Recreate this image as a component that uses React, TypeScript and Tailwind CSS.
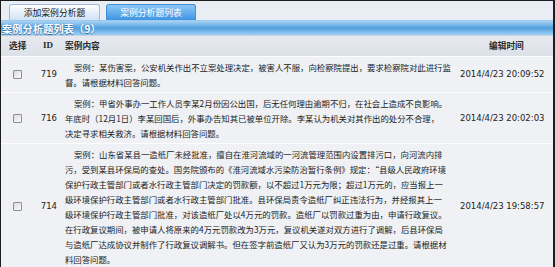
import React from "react";

type Row = {
  id: number;
  lines: string[];
  time: string;
};

const rows: Row[] = [
  {
    id: 719,
    lines: [
      "案例：某伤害案，公安机关作出不立案处理决定，被害人不服，向检察院提出，要求检察院对此进行监",
      "督。请根据材料回答问题。",
    ],
    time: "2014/4/23 20:09:52",
  },
  {
    id: 716,
    lines: [
      "案例：甲省外事办一工作人员李某2月份因公出国，后无任何理由逾期不归，在社会上造成不良影响。",
      "年底时（12月1日）李某回国后，外事办告知其已被单位开除。李某认为机关对其作出的处分不合理，",
      "决定寻求相关救济。请根据材料回答问题。",
    ],
    time: "2014/4/23 20:02:03",
  },
  {
    id: 714,
    lines: [
      "案例：山东省某县一造纸厂未经批准，擅自在淮河流域的一河流管理范围内设置排污口，向河流内排",
      "污，受到某县环保局的查处。国务院颁布的《淮河流域水污染防治暂行条例》规定：“县级人民政府环境",
      "保护行政主管部门或者水行政主管部门决定的罚款额，以不超过1万元为限；超过1万元的，应当报上一",
      "级环境保护行政主管部门或者水行政主管部门批准。县环保局责令造纸厂纠正违法行为，并经报其上一",
      "级环境保护行政主管部门批准，对该造纸厂处以4万元的罚款。造纸厂以罚款过重为由，申请行政复议。",
      "在行政复议期间，被申请人将原来的4万元罚款改为3万元，复议机关遂对双方进行了调解，后县环保局",
      "与造纸厂达成协议并制作了行政复议调解书。但在签字前造纸厂又认为3万元的罚款还是过重。请根据材",
      "料回答问题。",
    ],
    time: "2014/4/23 19:58:57",
  },
];

const cjk = "font-['Noto_Sans_CJK_SC',sans-serif]";
const latin = "font-['DejaVu_Sans','Noto_Sans_CJK_SC',sans-serif]";

function Checkbox() {
  return (
    <div className="w-[9px] h-[9px] border border-[#8e8f8f] bg-gradient-to-br from-[#dcdcdc] to-[#fbfbfb] rounded-[1px]" />
  );
}

export default function App() {
  return (
    <div className={`w-[555px] h-[267px] overflow-hidden bg-[#eff1f4] border-l border-t border-r-2 border-[#1e1e1e] ${cjk}`}>
      {/* tabs */}
      <div className="h-[19px] bg-[#e9edf4] flex items-end gap-[6px] pl-[8px]">
        <div className="w-[91px] h-[16px] rounded-t-[3px] border border-b-0 border-[#9bbbe0] bg-gradient-to-b from-[#ffffff] to-[#cfe2f5] flex items-center justify-center text-[8.8px] text-[#111]">
          添加案例分析题
        </div>
        <div className="w-[90px] h-[16px] rounded-t-[3px] border border-b-0 border-[#3f8fdc] bg-gradient-to-b from-[#8cc8f5] to-[#3e94e2] flex items-center justify-center text-[8.8px] text-white">
          案例分析题列表
        </div>
      </div>

      {/* title bar */}
      <div className="h-[15px] border-t border-[#9cc9ee] bg-gradient-to-b from-[#a9d3f3] via-[#4f9fe0] to-[#9dd0f4] flex items-center pl-[1px]">
        <span className="text-[10px] font-bold text-white [text-shadow:0_1px_1px_#245f9a] tracking-[0.3px]">
          案例分析题列表（9）
        </span>
      </div>

      {/* header row */}
      <div className="h-[21px] border-t border-[#c8d2de] bg-gradient-to-b from-[#e6e9ee] to-[#dde1e8] flex items-center text-[8.7px] font-bold text-[#2b2b2b]">
        <div className="w-[34px] pl-[8px]">选择</div>
        <div className="w-[30px] pl-[8px] font-['Liberation_Serif',serif] text-[9px]">ID</div>
        <div className="flex-1">案例内容</div>
        <div className="w-[64px]">编辑时间</div>
      </div>

      {/* rows */}
      {rows.map((r) => (
        <div key={r.id} className="flex items-center border-t border-[#fdfdfe] py-[2.5px] text-[#222]">
          <div className="w-[32px] flex justify-center">
            <Checkbox />
          </div>
          <div className={`w-[24px] text-right text-[8.5px] ${latin}`}>{r.id}</div>
          <div className="w-[403px] pl-[8px] text-[8.4px] leading-[15px]">
            {r.lines.map((l, i) => (
              <div key={i} className={`whitespace-nowrap ${i === 0 ? "pl-[9px]" : ""}`}>
                {l}
              </div>
            ))}
          </div>
          <div className={`flex-1 text-[8.5px] ${latin} whitespace-nowrap`}>{r.time}</div>
        </div>
      ))}
    </div>
  );
}
